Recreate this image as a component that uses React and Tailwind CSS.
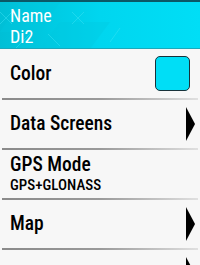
import React from "react";

const Arrow = () => (
  <svg width="9" height="34" viewBox="0 0 9 34" className="shrink-0">
    <polygon points="0,0 9,17 0,34" fill="#000" />
  </svg>
);

const Divider = () => (
  <div className="h-[2px] mx-[2px] bg-gradient-to-r from-[#8a8a8a] via-[#9a9a9a] to-[#e0e0e0]" />
);

const Row = ({ label, sub, right, tall }) => (
  <div className={`flex items-center justify-between pl-[10px] pr-[5px] ${tall ? "h-[49px]" : "h-[48px]"}`}>
    <div className="flex flex-col">
      <span className="text-[19.5px] leading-[22px] font-medium text-black">{label}</span>
      {sub && <span className="text-[15px] leading-[18px] font-medium text-black">{sub}</span>}
    </div>
    {right}
  </div>
);

export default function App() {
  return (
    <div
      className="w-[200px] h-[265px] overflow-hidden bg-[#f7f7f7]"
      style={{ fontFamily: '"Roboto Condensed", Roboto, sans-serif' }}
    >
      <div className="relative h-[49px] border-t-[2px] border-[#0b5866] border-b border-b-[#1aa9bb] bg-gradient-to-r from-[#00bfd6] via-[#00d6ef] to-[#00def6] overflow-hidden">
        <svg className="absolute inset-0" width="200" height="47" viewBox="0 0 200 47">
          <g fill="#00c8e0" opacity="0.35">
            <polygon points="20,0 60,0 40,30 0,30" />
            <polygon points="60,20 110,20 90,47 40,47" />
          </g>
          <g stroke="#40e4f6" strokeWidth="1" opacity="0.45" fill="none">
            <path d="M0 10 L12 22 M12 10 L0 22" />
            <path d="M72 10 L84 22 M84 10 L72 22" />
            <path d="M16 46 L30 32" />
            <path d="M48 32 L60 44" />
            <path d="M120 26 L110 40" />
          </g>
        </svg>
        <div className="relative flex flex-col pl-[10px] pt-[3px] text-white">
          <span className="text-[18px] leading-[21px]">Name</span>
          <span className="text-[18px] leading-[22px]">Di2</span>
        </div>
      </div>
      <Row
        tall
        label="Color"
        right={
          <div className="w-[35px] h-[35px] mr-[5px] rounded-[5px] border border-[#18323a] bg-[#00def6]" />
        }
      />
      <Divider />
      <Row label="Data Screens" right={<Arrow />} />
      <Divider />
      <Row label="GPS Mode" sub="GPS+GLONASS" />
      <Divider />
      <Row label="Map" right={<Arrow />} />
      <Divider />
      <Row label="" right={<Arrow />} />
    </div>
  );
}
